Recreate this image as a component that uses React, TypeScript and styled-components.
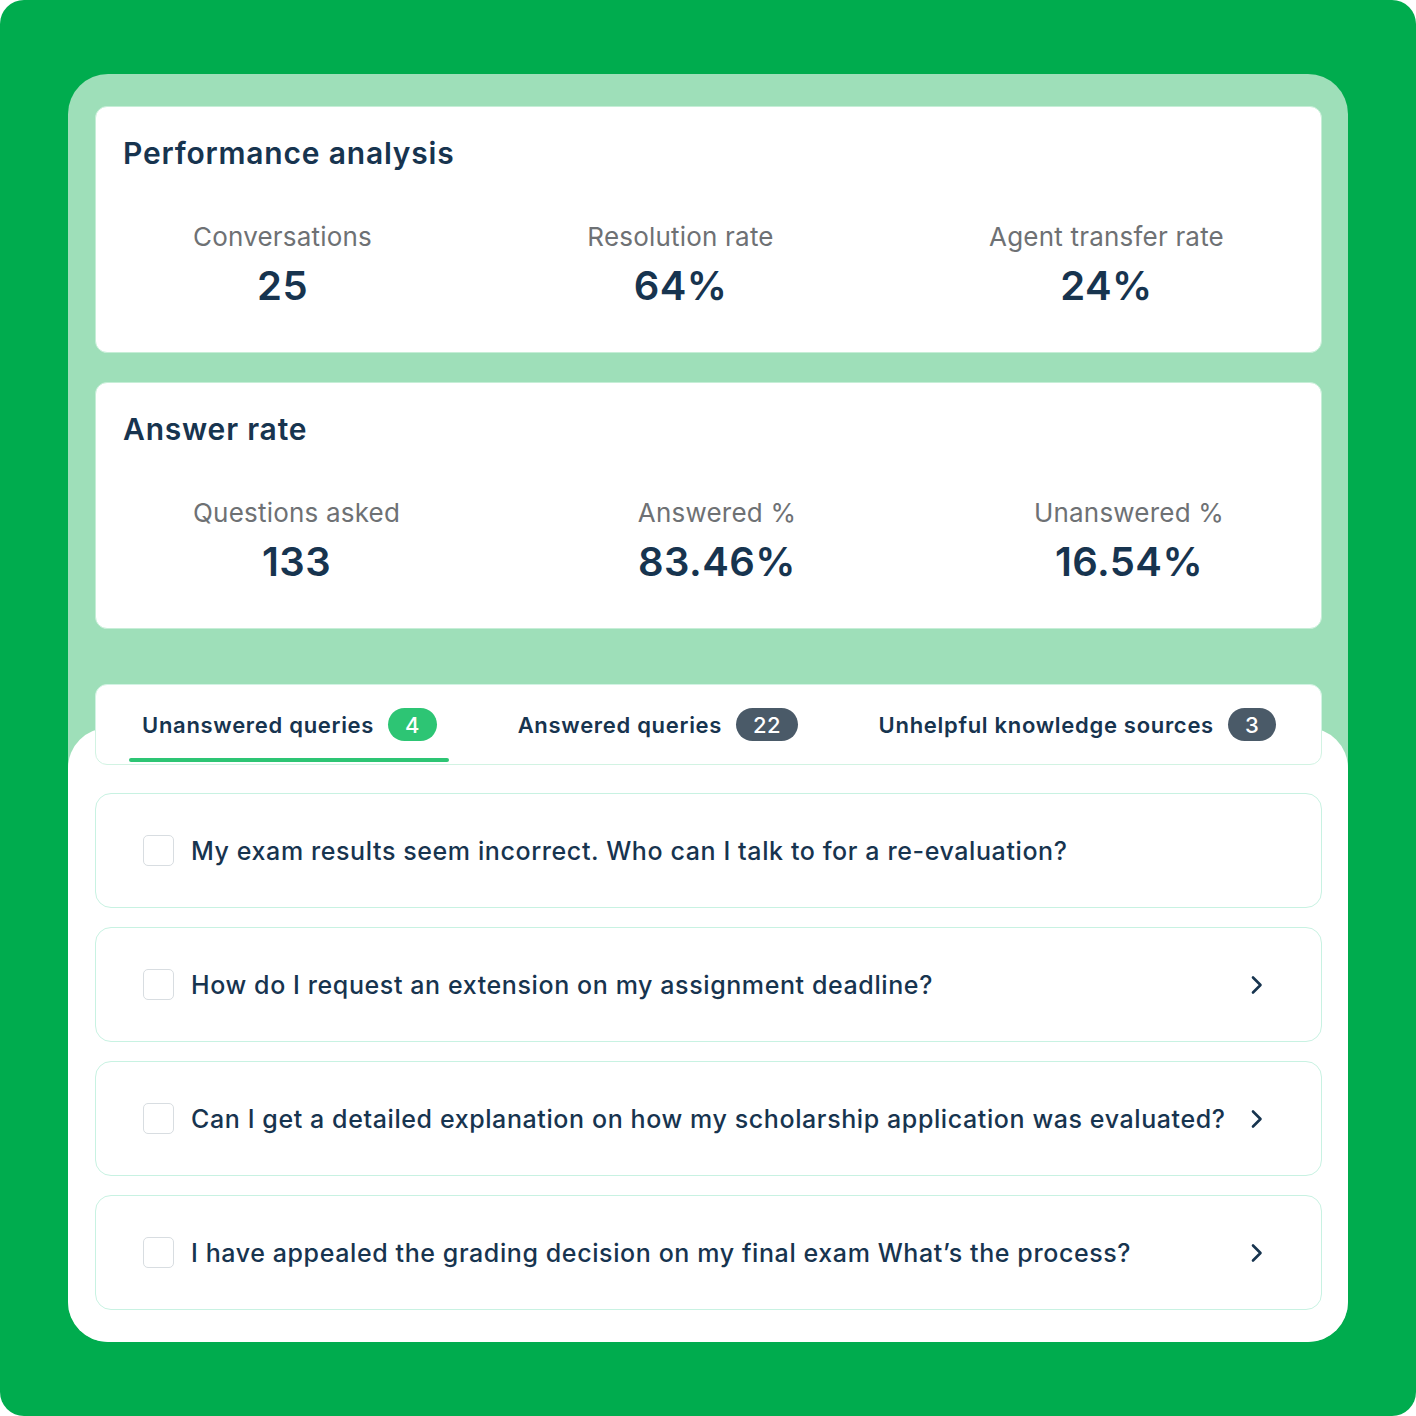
import React from "react";
import styled, { createGlobalStyle } from "styled-components";

const GlobalStyle = createGlobalStyle`
  html, body {
    margin: 0;
    padding: 0;
    background: #ffffff;
  }
  body {
    font-family: Inter, "Noto Sans", "Liberation Sans", sans-serif;
    -webkit-font-smoothing: antialiased;
  }
  * {
    box-sizing: border-box;
  }
`;

const Page = styled.div`
  width: 1416px;
  height: 1416px;
  background: #00ac4e;
  border-radius: 24px;
  padding: 74px 68px;
`;

const Panel = styled.div`
  display: flex;
  flex-direction: column;
  height: 100%;
  background: #9edfb9;
  border-radius: 40px;
  overflow: hidden;
`;

const TopSection = styled.div`
  display: flex;
  flex-direction: column;
  gap: 29px;
  padding: 32px 26px 0 27px;
`;

const Card = styled.div`
  background: #ffffff;
  border: 1px solid #c6eed7;
  border-radius: 12px;
  padding: 28px 27px 42px;
`;

const CardTitle = styled.h2`
  margin: 0;
  font-size: 30px;
  line-height: 36px;
  font-weight: 600;
  color: #17344f;
  letter-spacing: 0.8px;
`;

const Stats = styled.div`
  display: flex;
  justify-content: space-between;
  padding: 0 70px;
  margin-top: 50px;
`;

const Stat = styled.div`
  display: flex;
  flex-direction: column;
  align-items: center;
  gap: 9px;
`;

const StatLabel = styled.div`
  font-size: 26px;
  line-height: 32px;
  color: #6e7174;
  letter-spacing: 0.2px;
`;

const StatValue = styled.div`
  font-size: 40px;
  line-height: 48px;
  font-weight: 600;
  color: #17344f;
  letter-spacing: 0.4px;
`;

const BottomSection = styled.div`
  flex: 1;
  display: flex;
  flex-direction: column;
  margin-top: 99px;
  background: #ffffff;
  border-radius: 40px 40px 0 0;
  padding: 0 26px 32px 27px;
`;

const TabBar = styled.div`
  display: flex;
  justify-content: space-between;
  height: 81px;
  margin-top: -44px;
  padding: 0 33px;
  background: #ffffff;
  border: 1px solid #d2f3e3;
  border-radius: 12px;
`;

const Tab = styled.div<{ $active?: boolean }>`
  position: relative;
  display: flex;
  align-items: center;
  gap: 14px;
  padding: 0 12px 0 13px;
  font-size: 22px;
  font-weight: 600;
  color: #17344f;
  letter-spacing: 0.7px;

  &::after {
    content: "";
    display: ${(p) => (p.$active ? "block" : "none")};
    position: absolute;
    left: 0;
    right: 0;
    bottom: 2px;
    height: 4px;
    border-radius: 2px;
    background: #2dc574;
  }
`;

const Badge = styled.span<{ $tone: "green" | "slate" }>`
  display: inline-flex;
  align-items: center;
  justify-content: center;
  height: 33px;
  padding: 0 17px;
  border-radius: 17px;
  font-size: 22px;
  font-weight: 500;
  color: #ffffff;
  letter-spacing: 0.3px;
  background: ${(p) => (p.$tone === "green" ? "#2dc574" : "#4a5a68")};
`;

const QueryList = styled.div`
  display: flex;
  flex-direction: column;
  gap: 19px;
  margin-top: 28px;
`;

const QueryRow = styled.div`
  display: flex;
  align-items: center;
  height: 115px;
  padding: 0 57px 0 47px;
  border: 1px solid #c8f2e2;
  border-radius: 16px;
  background: #ffffff;
`;

const Checkbox = styled.span`
  flex: none;
  width: 31px;
  height: 31px;
  border: 1.5px solid #d8dde1;
  border-radius: 5px;
`;

const QueryText = styled.div`
  flex: 1;
  margin-left: 17px;
  font-size: 25px;
  font-weight: 500;
  color: #17344f;
  letter-spacing: 0.6px;
`;

const Chevron = () => (
  <svg width="14" height="20" viewBox="0 0 14 20" fill="none">
    <polyline
      points="3,2.5 10.5,10 3,17.5"
      stroke="#17344f"
      strokeWidth="2.6"
      strokeLinecap="round"
      strokeLinejoin="round"
    />
  </svg>
);

type StatItem = { label: string; value: string };

const performance: StatItem[] = [
  { label: "Conversations", value: "25" },
  { label: "Resolution rate", value: "64%" },
  { label: "Agent transfer rate", value: "24%" },
];

const answers: StatItem[] = [
  { label: "Questions asked", value: "133" },
  { label: "Answered %", value: "83.46%" },
  { label: "Unanswered %", value: "16.54%" },
];

const queries = [
  { text: "My exam results seem incorrect. Who can I talk to for a re-evaluation?", more: false },
  { text: "How do I request an extension on my assignment deadline?", more: true },
  { text: "Can I get a detailed explanation on how my scholarship application was evaluated?", more: true },
  { text: "I have appealed the grading decision on my final exam What\u2019s the process?", more: true },
];

const StatCard = ({ title, items }: { title: string; items: StatItem[] }) => (
  <Card>
    <CardTitle>{title}</CardTitle>
    <Stats>
      {items.map((s) => (
        <Stat key={s.label}>
          <StatLabel>{s.label}</StatLabel>
          <StatValue>{s.value}</StatValue>
        </Stat>
      ))}
    </Stats>
  </Card>
);

const App = () => {
  return (
    <>
      <GlobalStyle />
      <Page>
        <Panel>
          <TopSection>
            <StatCard title="Performance analysis" items={performance} />
            <StatCard title="Answer rate" items={answers} />
          </TopSection>
          <BottomSection>
            <TabBar>
              <Tab $active>
                Unanswered queries <Badge $tone="green">4</Badge>
              </Tab>
              <Tab>
                Answered queries <Badge $tone="slate">22</Badge>
              </Tab>
              <Tab>
                Unhelpful knowledge sources <Badge $tone="slate">3</Badge>
              </Tab>
            </TabBar>
            <QueryList>
              {queries.map((q) => (
                <QueryRow key={q.text}>
                  <Checkbox />
                  <QueryText>{q.text}</QueryText>
                  {q.more && <Chevron />}
                </QueryRow>
              ))}
            </QueryList>
          </BottomSection>
        </Panel>
      </Page>
    </>
  );
};

export default App;
